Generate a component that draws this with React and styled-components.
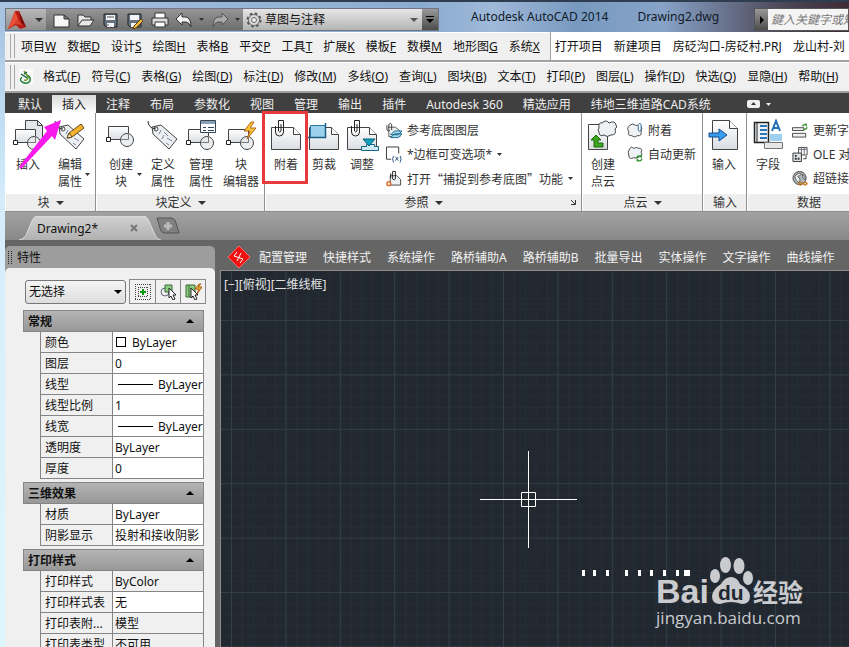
import React from 'react'
import styled, { createGlobalStyle } from 'styled-components'

const GlobalStyle = createGlobalStyle`
  * { box-sizing: border-box; }
  body {
    margin: 0;
    overflow: hidden;
    font: 12px/17px "Noto Sans", "Noto Sans CJK SC", sans-serif;
    color: #111;
  }
  button, input, select {
    font: inherit;
    color: inherit;
    margin: 0;
    padding: 0;
    border: 0;
    background: none;
  }
  button { white-space: nowrap; flex: none; }
  svg { display: block; flex: none; }
`

const Window = styled.div`
  height: 100vh;
  display: flex;
  flex-direction: column;
  padding-left: 5px;
  background: linear-gradient(to bottom, #9dbbdc, #b9d5ee 80px, #d3edfb 200px, #e0f6fd);
  overflow: hidden;
`

const TitleBar = styled.header`
  display: flex;
  align-items: flex-end;
  height: 32px;
  flex: none;
  padding-bottom: 1px;
  margin-left: -5px;
  padding-left: 5px;
  border-top: 2px solid #2f3d50;
  background: linear-gradient(to right, #a9c3e2, #8aabd0 50%, #9fb9d8 58%, #7899bf 68%, #87a3c8 78%, #4d4858 92%, #3c2b35);
`

const QuickAccess = styled.div`
  display: flex;
  align-items: center;
  width: 434px;
  height: 23px;
  flex: none;
  border: 1px solid #6d7681;
  background: linear-gradient(to bottom, #959595, #6e6e6e);
`

const AppButton = styled.button`
  display: flex;
  align-items: center;
  gap: 9px;
  width: 40px;
  height: 100%;
  padding-left: 2px;
  background: linear-gradient(to bottom, #b8b8b8, #8f8f8f);
`

const QuickTools = styled.div`
  display: flex;
  align-items: center;
  justify-content: space-between;
  flex: 1;
  padding: 0 3px 0 7px;
`

const Workspace = styled.label`
  display: flex;
  align-items: center;
  position: relative;
  width: 179px;
  height: 21px;
  padding-left: 3px;
  background: linear-gradient(to bottom, #e6e6e6, #b4b4b4);

  select {
    appearance: none;
    flex: 1;
    height: 21px;
    padding-left: 3px;
    outline: none;
  }
`

const MoreButton = styled.button`
  display: flex;
  align-items: center;
  justify-content: center;
  width: 16px;
  height: 21px;
  background: linear-gradient(to bottom, #999, #4c4c4c);
`

const Title = styled.div`
  flex: 1;
  display: flex;
  gap: 29px;
  align-self: flex-start;
  padding: 6px 0 0 32px;
  white-space: pre;
  color: #101a28;
`

const Search = styled.div`
  display: flex;
  width: 95px;
  height: 23px;
  flex: none;
  border: 1px solid #555;

  input {
    flex: 1;
    min-width: 0;
    background: #f4f4f4;
    padding-left: 3px;
    font-style: italic;
    white-space: nowrap;
  }
  input::placeholder { color: #777; }
`

const SearchArrow = styled(MoreButton)`
  width: 13px;
`

const MenuRow = styled.nav`
  display: flex;
  align-items: center;
  flex: none;
  height: ${p => p.$h || 30}px;
  padding-left: 5px;
  background: #f0f0f0;
  border-bottom: 2px solid #a0a0a0;
  box-shadow: inset 0 1px #fff;
  overflow: hidden;
`

const Grip = styled.span`
  width: 5px;
  height: 24px;
  flex: none;
  border: solid #a8a8a8;
  border-width: 0 1px;
`

const MenuItems = styled.div`
  display: flex;
  gap: 11px;
  padding-left: ${p => p.$left || 0}px;
`

const Projects = styled(MenuItems)`
  align-items: center;
  align-self: stretch;
  flex: 1;
  margin-left: 10px;
  border-left: 1px solid #a0a0a0;
  background: #fff;
`

const Tabs = styled.div`
  display: flex;
  align-items: flex-end;
  flex: none;
  height: 20px;
  padding-left: 3px;
  background: #404040;
  overflow: hidden;
`

const Tab = styled.button`
  height: 18px;
  padding: 0 10px;
  color: ${p => (p.$active ? '#222' : '#eee')};
  background: ${p => (p.$active ? 'linear-gradient(to bottom, #d8d8d8, #fff)' : 'none')};
`

const RibbonToggle = styled.button`
  display: flex;
  align-items: center;
  gap: 6px;
  height: 18px;
  margin-left: 26px;
`

const Ribbon = styled.div`
  position: relative;
  display: flex;
  flex: none;
  height: 99px;
  background: #fff;
  border-bottom: 1px solid #8c8c8c;
`

const Panel = styled.section`
  display: flex;
  flex-direction: column;
  flex: 0 0 ${p => p.$w}px;
  border-right: 1px solid #909090;
`

const PanelBody = styled.div`
  display: flex;
  height: 81px;
  padding: 6px 0 0 ${p => p.$left || 2}px;
  white-space: nowrap;
`

const PanelTitle = styled.button`
  display: flex;
  align-items: center;
  justify-content: center;
  gap: 6px;
  position: relative;
  height: 17px;
  margin-left: 1px;
  color: #333;
  background: #eee;
`

const Launcher = styled.span`
  position: absolute;
  right: 4px;
`

const BigButton = styled.button`
  display: flex;
  flex-direction: column;
  align-items: center;
  gap: 5px;
  position: relative;
  width: ${p => p.$w || 38}px;
  height: 72px;
  color: #333;
`

const ButtonCaret = styled.span`
  position: absolute;
  right: 1px;
  top: 54px;
`

const SmallList = styled.div`
  display: flex;
  flex-direction: column;
  gap: 7px;
  padding: 3px 0 0 5px;
`

const SmallButton = styled.button`
  display: flex;
  align-items: center;
  gap: 5px;
  height: 17px;
  color: #333;
`

const WideQuotes = styled.span`
  font-family: "Noto Sans CJK SC", sans-serif;
`

const Highlight = styled.div`
  position: absolute;
  left: 257px;
  top: -2px;
  width: 46px;
  height: 73px;
  border: 3px solid #e63a3c;
`

const Arrow = styled.svg`
  position: absolute;
  left: 13px;
  top: 6px;
`

const FileTabs = styled.div`
  display: flex;
  align-items: flex-end;
  flex: none;
  height: 28px;
  padding-left: 14px;
  background: linear-gradient(to bottom, #a2a2a2, #888);
`

const FileTab = styled.button`
  display: flex;
  align-items: center;
  justify-content: space-between;
  position: relative;
  width: 142px;
  height: 24px;
  padding: 0 23px 0 18px;

  > * { z-index: 1; }
  > svg:first-child {
    position: absolute;
    left: 0;
    top: 0;
    z-index: 0;
  }
`

const NewTab = styled.button`
  align-self: center;
  margin-left: -5px;
`

const Workarea = styled.main`
  display: flex;
  flex: 1;
  min-height: 0;
  background: #656565;
`

const Palette = styled.aside`
  display: flex;
  flex-direction: column;
  width: 210px;
  flex: none;
  margin-top: 6px;
  border-radius: 5px 5px 0 0;
  background: #9d9d9d;
`

const PaletteTitle = styled.h2`
  display: flex;
  align-items: center;
  gap: 5px;
  flex: none;
  height: 22px;
  margin: 0;
  padding-left: 3px;
  font: inherit;
`

const PaletteBody = styled.div`
  flex: 1;
  min-height: 0;
  overflow: hidden;
  padding: 11px 11px 0 18px;
  border-radius: 5px 5px 0 0;
  background: #f0f0f0;
`

const Picker = styled.div`
  display: flex;
  align-items: center;
  gap: 3px;
  margin: 0 -2px 6px 2px;
`

const Selection = styled.label`
  position: relative;
  flex: 1;

  select {
    appearance: none;
    display: block;
    width: 100%;
    height: 24px;
    padding-left: 3px;
    border: 1px solid #777;
    border-radius: 3px;
    background: linear-gradient(to bottom, #f4f4f4, #ddd);
  }
`

const SelectCaret = styled.span`
  position: absolute;
  right: 4px;
  top: 50%;
  margin-top: -2px;
  pointer-events: none;
`

const PickerButtons = styled.div`
  display: flex;
  border: 1px solid #8a8a8a;

  button {
    display: flex;
    align-items: center;
    justify-content: center;
    width: 25px;
    height: 23px;
  }
  button + button { border-left: 1px solid #8a8a8a; }
`

const SectionHead = styled.button`
  display: flex;
  align-items: center;
  justify-content: space-between;
  width: 100%;
  height: 22px;
  padding: 0 9px 0 4px;
  border: 1px solid #858585;
  font-weight: bold;
  background: linear-gradient(to bottom, #b4b4b4, #989898);
`

const Grid = styled.table`
  width: calc(100% - 17px);
  margin: -1px 0 3px 17px;
  border-collapse: collapse;
  table-layout: fixed;

  th, td {
    height: 21px;
    padding: 0 0 0 4px;
    border: 1px solid #858585;
    font-weight: normal;
    text-align: left;
    white-space: nowrap;
    overflow: hidden;
  }
  th { width: 72px; }
  td { padding-left: 2px; background: #fff; }
  tr[data-locked='true'] td { background: #f0f0f0; }
`

const Value = styled.span`
  display: flex;
  align-items: center;
`

const Swatch = styled.i`
  width: 10px;
  height: 10px;
  margin: 0 6px 0 1px;
  border: 1px solid #000;
`

const LineSample = styled.i`
  width: 35px;
  height: 1px;
  flex: none;
  margin: 0 5px 0 3px;
  background: #000;
`

const Drawing = styled.div`
  display: flex;
  flex-direction: column;
  flex: 1;
  min-width: 0;
  margin-left: 5px;
`

const RoadTools = styled.div`
  display: flex;
  align-items: center;
  gap: 16px;
  flex: none;
  height: 30px;
  padding: 4px 0 0 8px;
  color: #f2f2f2;
  overflow: hidden;

  svg { margin-right: -7px; }
`

const Canvas = styled.div`
  position: relative;
  flex: 1;
  min-height: 0;
  border: solid #8d8d8d;
  border-width: 1px 0 0 1px;
  background: #212830;
  overflow: hidden;
`

const Scene = styled.svg`
  position: absolute;
  width: 100%;
  height: 100%;
`

const ViewLabel = styled.div`
  position: absolute;
  left: 3px;
  top: 5px;
  color: #e4e4e4;
`

const Watermark = styled.div`
  position: absolute;
  right: 46px;
  bottom: 17px;
  color: #c9cbce;
`

const Brand = styled.div`
  display: flex;
  align-items: flex-end;
  height: 50px;
  font: bold 34px/30px "Liberation Sans", sans-serif;

  b { font: bold 25px/30px "Noto Sans CJK SC", sans-serif; }
`

const Site = styled.div`
  font: 17px/24px "Open Sans", "Noto Sans", sans-serif;
`

const Caret = ({ up, w = 8, color = '#333' }) => (
  <svg width={w} height={Math.ceil(w / 2)} viewBox="0 0 8 4" preserveAspectRatio="none" fill={color}>
    <path d={up ? 'M0 4h8L4 0z' : 'M0 0h8L4 4z'} />
  </svg>
)

const icons = {
  new: <path d="M1 4h10l5 4v8H1z M11 4v4h5" fill="#f6f6f6" stroke="#333" />,
  open: <path d="M1 15V4h5l2 2h6v3M1 15l4-6h12l-4 6z" fill="#e8e8e8" stroke="#333" />,
  save: <><path d="M2 3h13v13H4l-2-2z" fill="#65717f" stroke="#222" /><path d="M4 4h9v5H4z M5 12h7v4H5z" fill="#f4f4f4" /><path d="M5 6h7M6 13v2" stroke="#555" /></>,
  saveAs: <><path d="M2 3h13v13H4l-2-2z" fill="#65717f" stroke="#222" /><path d="M4 4h9v5H4z M5 12h7v4H5z" fill="#f4f4f4" /><path d="M8 15l7-7 2 2-7 7-3 1z" fill="#f5b83d" stroke="#5b4210" /></>,
  print: <><path d="M4 7V2h10v5" fill="#fff" stroke="#333" /><path d="M1 7h16v7H1z" fill="#dcdcdc" stroke="#333" /><path d="M4 11h10v5H4z" fill="#fff" stroke="#333" /></>,
  undo: <path d="M1 8l6-6v4h4q5 1 5 10-2-5-5-5H7v3z" fill="#f2f2f2" stroke="#333" />,
  redo: <path d="M17 8l-6-6v4H7q-5 1-5 10 2-5 5-5h4v3z" fill="#aaa" stroke="#555" />
}

const Tool = ({ name, label }) => (
  <button aria-label={label}>
    <svg width="18" height="18" viewBox="0 0 18 18">{icons[name]}</svg>
  </button>
)

const Block = () => (
  <>
    <path d="M3.500 10.500h20v13h-20z" fill="url(#sheet)" stroke="#444" />
    <circle cx="22" cy="24" r="6.500" fill="#e9ecf0" fillOpacity=".85" stroke="#444" />
    <path d="M23.500 17v6.500h-7" fill="none" stroke="#777" />
    <path d="M1.500 21.500h4v4h-4z" fill="#fff" stroke="#222" />
  </>
)

const Tag = () => (
  <>
    <path d="M5 8l9-2 16 14-8 10L6 15z" fill="#eceff3" stroke="#444" />
    <circle cx="9" cy="10" r="2" fill="#fff" stroke="#444" />
    <path d="M9 10Q1 9 1 2" fill="none" stroke="#333" />
    <path d="M12 15l2-4M17 13l4 4M15 20l2-4M20 19l5 3M19 24l3 2" stroke="#789" />
  </>
)

const Sheet = () => (
  <>
    <path d="M1.500 8.500h22l7 7v15h-29z" fill="url(#sheet)" stroke="#444" />
    <path d="M23.500 8.500v7h7" fill="#fff" stroke="#444" />
  </>
)

const Clip = () => (
  <path d="M5.500 7v6q0 4 4 4t4-4V1.500h-5V12q1 2 2.500 0V5" fill="none" stroke="#222" />
)

const Cloud = () => (
  <path d="M15 4q4-4 7 0 6-3 7 2 2 2-1 4 2 6-4 6-4 3-7 0-5 2-5-3-2-2 0-4-1-6 3-5z" fill="#eef2f4" stroke="#444" />
)

const bigIcons = {
  insert: <><path d="M13.500 18V1.500h12l5 5V22" fill="#e3e7ec" stroke="#444" /><path d="M25.500 1.500v5h5" fill="none" stroke="#444" /><Block /></>,
  editTag: <><Tag /><path d="M13 19l2-5L27 5l3 4-12 9z" fill="#f2b12f" stroke="#654812" /><path d="M13 19l2-5 3 4z" fill="#ffeec8" stroke="#654812" /></>,
  block: <g transform="translate(0 -3)"><Block /></g>,
  tag: <Tag />,
  manage: <><Block /><path d="M15.500 1.500h15v12h-15z" fill="#fff" stroke="#345" /><path d="M16 2h14v3H16z" fill="#8aa0b5" /><path d="M18 8.500h3M18 11.500h3M23 8.500h6M23 11.500h6" stroke="#345" /></>,
  editor: <><Block /><path d="M26 3l-7 9h6l-3 8 9-11h-6l4-6z" fill="#f9c33a" stroke="#b4691a" /></>,
  attach: <><Sheet /><Clip /></>,
  clip: <><Sheet /><path d="M2 7h16v11H2z" fill="#9cd0ec" /><path d="M2.500 19V6.500h15" fill="none" stroke="#2977a0" /><path d="M0 18.500h17.500V4" fill="none" stroke="#185d88" strokeWidth="1.500" /></>,
  adjust: <><Sheet /><Clip /><path d="M15.500 27.500h5v-2h8v2h4v4h-17z" fill="#cdeaf5" stroke="#156580" /><path d="M17 20h12l-6 7z" fill="#12a3c0" stroke="#0b5c70" /></>,
  cloud: <><path d="M1.500 5.500h19v25h-19z" fill="url(#sheet)" stroke="#444" /><Cloud /><path d="M4 21l5-5 5 5h-3v3h5v4H7v-7z" fill="#3ba51d" stroke="#1e6b0e" /></>,
  import: <><path d="M4.500 1.500h17l8 8v21h-25z" fill="url(#sheet)" stroke="#444" /><path d="M21.500 1.500v8h8" fill="#fff" stroke="#444" /><path d="M1 14h10v-4l8 6-8 6v-4H1z" fill="#3a9cec" stroke="#124f8f" /></>,
  field: <><path d="M2.500 3.500h14v20h-14z" fill="#eef1f3" stroke="#222" strokeWidth="1.500" /><path d="M5 4v20" stroke="#222" /><path d="M8 7h7M8 11h7M8 15h7M8 19h7" stroke="#2b77b8" strokeWidth="2" /><path d="M18 15h12v7H18z" fill="#9fd0f0" /><path d="M12.500 23.500h18v6h-18z" fill="#e7e7e7" stroke="#777" /><path d="M20 12l4-10 4 10M21 9h6" fill="none" stroke="#1f6fb5" strokeWidth="2" /></>
}

const smallIcons = {
  layers: <><path d="M3 5h7l5 4v6H3z" fill="#eef1f3" stroke="#555" /><path d="M3 6V2q2-2 3 0v6M1 3v5q2 2 3 0" fill="none" stroke="#333" /><path d="M5 13l4-4h8l-4 4z M5 16l4-4h8l-4 4z" fill="#a8dcf0" stroke="#14678e" /></>,
  frame: <><path d="M5.500 13.500h-5v-13h13v7" fill="none" stroke="#333" /><path d="M8 10q-2 3 0 7M15 10q2 3 0 7M10 11l3 4M13 11l-3 4" fill="none" stroke="#27527c" /></>,
  snap: <><path d="M4.500 5.500h7l4 4v6h-11z" fill="#eef1f3" stroke="#444" /><path d="M7 9V1h3v8q-1 2-3 0M5 3v5" fill="none" stroke="#222" /><circle cx="3" cy="14" r="2" fill="#fff" stroke="#dd6a28" strokeWidth="1.500" /></>,
  cloudAttach: <><path d="M3 3q3-3 6 0h5q3 3 1 6 1 6-4 5-3 3-6 0-5 0-3-4-3-4 1-7z" fill="#eef2f4" stroke="#444" /><path d="M12 3v5q1 3 3 0V2q-1-2-3 0" fill="#fff" stroke="#24659a" /></>,
  cloudUpdate: <><path d="M3 2q2-3 4 0 3-2 6 0 4 0 2 4 2 4-2 5-3 2-6 1-5 2-5-2-2-4 1-8z" fill="#eef2f4" stroke="#444" /><path d="M10 12q2-3 5-1V9M16 13q-2 4-5 1v2" fill="none" stroke="#27922a" strokeWidth="1.500" /></>,
  fieldUpdate: <><path d="M.5 5.500h12v3H.5z M.5 11.500h14v4H.5z" fill="#eee" stroke="#444" /><path d="M11 4q2-3 4-1V1M16 5q-1 3-4 2" fill="none" stroke="#3a9330" strokeWidth="1.500" /></>,
  ole: <><path d="M7 1h9v8H7z" fill="#fff" stroke="#444" /><path d="M7 3h9M10 1v8M13 1v8" stroke="#667" /><path d="M1 7h9v9H1z" fill="#dfe3e8" stroke="#333" /><path d="M3 9h2v2H3zM6 12h2v2H6zM3 12h2v2H3z" fill="#333" /><path d="M12 13h3v-3" stroke="#333" fill="none" /></>,
  link: <><circle cx="8" cy="8" r="7" fill="#aeb6bd" stroke="#444" /><path d="M3 6q5-5 7-2-2 2-4 2 4 3 2 7-4-1-5-7M11 4q4 2 3 6-3-1-3-6" fill="#eef2f4" stroke="#555" /><path d="M7 14q2-3 4 0-2 3-4 0M12 14q2-3 4 0-2 3-4 0" fill="none" stroke="#c07820" strokeWidth="1.500" /></>
}

const RibbonButton = ({ icon, lines, w, caret }) => (
  <BigButton $w={w}>
    <svg width="32" height="32" viewBox="0 0 32 32" overflow="visible">{bigIcons[icon]}</svg>
    <span>{lines.map((line, i) => <div key={i}>{line}</div>)}</span>
    {caret && <ButtonCaret><Caret w={5} /></ButtonCaret>}
  </BigButton>
)

const ListButton = ({ icon, children, caret }) => (
  <SmallButton>
    <svg width="16" height="17" viewBox="0 0 17 17">{smallIcons[icon]}</svg>
    {children}
    {caret && <Caret w={5} />}
  </SmallButton>
)

const menus = [['项目', 'W'], ['数据', 'D'], ['设计', 'S'], ['绘图', 'H'], ['表格', 'B'], ['平交', 'P'], ['工具', 'T'], ['扩展', 'K'], ['模板', 'F'], ['数模', 'M'], ['地形图', 'G'], ['系统', 'X']]
const projects = ['打开项目', '新建项目', '房砭沟口-房砭村.PRJ', '龙山村-刘']
const commands = [['格式', 'F'], ['符号', 'C'], ['表格', 'G'], ['绘图', 'D'], ['标注', 'D'], ['修改', 'M'], ['多线', 'O'], ['查询', 'L'], ['图块', 'B'], ['文本', 'T'], ['打印', 'P'], ['图层', 'L'], ['操作', 'D'], ['快选', 'Q'], ['显隐', 'H'], ['帮助', 'H']]
const tabs = ['默认', '插入', '注释', '布局', '参数化', '视图', '管理', '输出', '插件', 'Autodesk 360', '精选应用', '纬地三维道路CAD系统']
const roadTools = ['配置管理', '快捷样式', '系统操作', '路桥辅助A', '路桥辅助B', '批量导出', '实体操作', '文字操作', '曲线操作']

const sections = [
  {
    name: '常规',
    rows: [
      ['颜色', <Value><Swatch />ByLayer</Value>],
      ['图层', '0'],
      ['线型', <Value><LineSample />ByLayer</Value>],
      ['线型比例', '1'],
      ['线宽', <Value><LineSample />ByLayer</Value>],
      ['透明度', 'ByLayer'],
      ['厚度', '0']
    ]
  },
  { name: '三维效果', rows: [['材质', 'ByLayer'], ['阴影显示', '投射和接收阴影']] },
  {
    name: '打印样式',
    rows: [['打印样式', 'ByColor', true], ['打印样式表', '无'], ['打印表附...', '模型', true], ['打印表类型', '不可用', true]]
  }
]

const Header = () => (
  <TitleBar>
    <QuickAccess>
      <AppButton aria-label="应用程序菜单">
        <svg width="18" height="20" viewBox="0 0 18 20">
          <path d="M7 1h4l7 16-6 2-4-4-8 4z" fill="#b81c14" />
          <path d="M7 1l3 8-3 5-7 5z" fill="#e9503a" />
          <path d="M11 1l7 16-5-4z" fill="#7e0f0b" />
          <path d="M10 9l4 6-7-1z" fill="#d9402e" />
        </svg>
        <Caret />
      </AppButton>
      <QuickTools>
        <Tool name="new" label="新建" />
        <Tool name="open" label="打开" />
        <Tool name="save" label="保存" />
        <Tool name="saveAs" label="另存为" />
        <Tool name="print" label="打印" />
        <Tool name="undo" label="放弃" />
        <Caret w={5} />
        <Tool name="redo" label="重做" />
        <Caret w={5} />
      </QuickTools>
      <Workspace>
        <svg width="16" height="16" viewBox="0 0 16 16">
          <circle cx="8" cy="8" r="6.500" fill="none" stroke="#555" strokeWidth="2" strokeDasharray="2.600 2.500" />
          <circle cx="8" cy="8" r="5.500" fill="#ddd" stroke="#666" />
          <circle cx="8" cy="8" r="2.500" fill="#eee" stroke="#666" />
        </svg>
        <select aria-label="工作空间"><option>草图与注释</option></select>
        <SelectCaret><Caret color="#555" /></SelectCaret>
      </Workspace>
      <MoreButton aria-label="自定义">
        <svg width="8" height="7" viewBox="0 0 8 7"><path d="M0 0h8v1H0zM0 3h8L4 7z" /></svg>
      </MoreButton>
    </QuickAccess>
    <Title><span>Autodesk AutoCAD 2014</span><span>Drawing2.dwg</span></Title>
    <Search>
      <SearchArrow aria-label="展开"><svg width="4" height="8" viewBox="0 0 4 8"><path d="M0 0l4 4-4 4z" /></svg></SearchArrow>
      <input aria-label="搜索" placeholder="鍵入关鍵字或短语" />
    </Search>
  </TitleBar>
)

const RibbonPanels = () => (
  <Ribbon>
    <svg width="0" height="0" style={{ position: 'absolute' }}>
      <linearGradient id="sheet" x1="0" y1="0" x2="0" y2="1">
        <stop offset="0" stopColor="#fff" />
        <stop offset="1" stopColor="#d9dde2" />
      </linearGradient>
    </svg>
    <Panel $w={91}>
      <PanelBody>
        <RibbonButton icon="insert" lines={['插入']} w={42} />
        <RibbonButton icon="editTag" lines={['编辑', '属性']} w={42} caret />
      </PanelBody>
      <PanelTitle>块 <Caret /></PanelTitle>
    </Panel>
    <Panel $w={169}>
      <PanelBody $left={3}>
        <RibbonButton icon="block" lines={['创建', '块']} w={44} caret />
        <RibbonButton icon="tag" lines={['定义', '属性']} w={40} />
        <RibbonButton icon="manage" lines={['管理', '属性']} w={36} />
        <RibbonButton icon="editor" lines={['块', '编辑器']} w={44} />
      </PanelBody>
      <PanelTitle>块定义 <Caret /></PanelTitle>
    </Panel>
    <Panel $w={317}>
      <PanelBody>
        <RibbonButton icon="attach" lines={['附着']} />
        <RibbonButton icon="clip" lines={['剪裁']} />
        <RibbonButton icon="adjust" lines={['调整']} />
        <SmallList>
          <ListButton icon="layers">参考底图图层</ListButton>
          <ListButton icon="frame" caret>*边框可变选项*</ListButton>
          <ListButton icon="snap" caret><WideQuotes>打开“捕捉到参考底图”功能</WideQuotes></ListButton>
        </SmallList>
      </PanelBody>
      <PanelTitle>
        参照 <Caret />
        <Launcher><svg width="7" height="7" viewBox="0 0 7 7"><path d="M1 1l4 4M5.500 1v4.500H1" fill="none" stroke="#333" /></svg></Launcher>
      </PanelTitle>
    </Panel>
    <Panel $w={121}>
      <PanelBody>
        <RibbonButton icon="cloud" lines={['创建', '点云']} />
        <SmallList>
          <ListButton icon="cloudAttach">附着</ListButton>
          <ListButton icon="cloudUpdate">自动更新</ListButton>
        </SmallList>
      </PanelBody>
      <PanelTitle>点云 <Caret /></PanelTitle>
    </Panel>
    <Panel $w={44}>
      <PanelBody>
        <RibbonButton icon="import" lines={['输入']} />
      </PanelBody>
      <PanelTitle>输入</PanelTitle>
    </Panel>
    <Panel $w={124}>
      <PanelBody>
        <RibbonButton icon="field" lines={['字段']} />
        <SmallList>
          <ListButton icon="fieldUpdate">更新字</ListButton>
          <ListButton icon="ole">OLE 对</ListButton>
          <ListButton icon="link">超链接</ListButton>
        </SmallList>
      </PanelBody>
      <PanelTitle>数据</PanelTitle>
    </Panel>
    <Highlight />
    <Arrow width="44" height="52" viewBox="0 0 44 52">
      <path d="M43 1L26 8l3 4L1 48l2 2 31-33 3 4z" fill="#f719ee" />
    </Arrow>
  </Ribbon>
)

const Properties = () => (
  <Palette>
    <PaletteTitle>
      <svg width="4" height="13" viewBox="0 0 4 13">
        <path d="M.5 0v13M3.500 0v13" stroke="#222" strokeDasharray="1 1" />
      </svg>
      特性
    </PaletteTitle>
    <PaletteBody>
      <Picker>
        <Selection>
          <select aria-label="选择对象"><option>无选择</option></select>
          <SelectCaret><Caret color="#000" /></SelectCaret>
        </Selection>
        <PickerButtons>
          <button aria-label="添加选择">
            <svg width="16" height="16" viewBox="0 0 16 16">
              <path d="M0 .5h16M3 3.500h10M3 12.500h10M0 15.500h16M.5 0v16M15.500 0v16M3.500 3v10M12.500 3v10" stroke="#444" strokeDasharray="1 1" />
              <path d="M8 5v6M5 8h6" stroke="#0a9a10" strokeWidth="2" />
            </svg>
          </button>
          <button aria-label="选择对象">
            <svg width="17" height="17" viewBox="0 0 17 17">
              <circle cx="5" cy="9" r="4" fill="#eee" stroke="#667" />
              <path d="M5 2h7v7H5z" fill="#8ccc84" stroke="#3b6b37" />
              <path d="M9 5v10l2-2 2 4 2-1-2-4h3z" fill="#fff" stroke="#222" />
            </svg>
          </button>
          <button aria-label="快速选择">
            <svg width="17" height="17" viewBox="0 0 17 17">
              <path d="M1 2h9v12H1z" fill="#8ccc84" stroke="#3b6b37" />
              <path d="M4 2v12" stroke="#3b6b37" />
              <path d="M14 1l-4 5h4l-2 5 5-7h-4l3-3z" fill="#f6b52c" stroke="#a85f12" />
              <path d="M6 5v10l2-2 2 4 2-1-2-4h3z" fill="#fff" stroke="#222" />
            </svg>
          </button>
        </PickerButtons>
      </Picker>
      {sections.map(({ name, rows }) => (
        <React.Fragment key={name}>
          <SectionHead>{name}<Caret up color="#000" /></SectionHead>
          <Grid>
            <tbody>
              {rows.map(([label, value, locked]) => (
                <tr key={label} data-locked={!!locked}>
                  <th scope="row">{label}</th>
                  <td>{value}</td>
                </tr>
              ))}
            </tbody>
          </Grid>
        </React.Fragment>
      ))}
    </PaletteBody>
  </Palette>
)

const Model = () => (
  <Canvas>
    <Scene>
      <defs>
        <pattern id="grid" x="10" y="49" width="54.4" height="54.4" patternUnits="userSpaceOnUse">
          <path d="M11.4 0v54.4M22.3 0v54.4M33.1 0v54.4M44 0v54.4M0 11.4h54.4M0 22.3h54.4M0 33.1h54.4M0 44h54.4" stroke="#262d37" />
          <path d="M.5 0v54.4M0 .5h54.4" stroke="#353d49" />
        </pattern>
      </defs>
      <rect width="100%" height="100%" fill="url(#grid)" />
      <path d="M259 228.500h97M307.500 180v97M300.500 221.500h14v14h-14z" fill="none" stroke="#fff" />
      <path d="M361 299h3v6h-3zM372 299h3v6h-3zM385 299h3v6h-3zM404 299h3v6h-3zM417 299h3v6h-3zM429 299h3v6h-3zM442 299h3v6h-3zM455 299h3v6h-3zM463 299h6v6h-6z" fill="#fff" />
    </Scene>
    <ViewLabel>[−][俯视][二维线框]</ViewLabel>
    <Watermark>
      <Brand>
        Bai
        <svg width="44" height="50" viewBox="0 0 44 50" fill="#c9cbce">
          <ellipse cx="6" cy="20" rx="5" ry="7" />
          <ellipse cx="16.500" cy="9" rx="5.500" ry="8" />
          <ellipse cx="30" cy="10" rx="5.500" ry="8" />
          <ellipse cx="39" cy="22" rx="5" ry="7" />
          <path d="M22 21q6 0 9 7 10 6 10 12 0 8-8 8-6-2-11-2t-11 2q-8 0-8-8 1-7 9-12 4-7 10-7z" />
          <text x="9" y="44" fill="#212830" fontSize="21">du</text>
        </svg>
        <b>经验</b>
      </Brand>
      <Site>jingyan.baidu.com</Site>
    </Watermark>
  </Canvas>
)

const App = () => (
  <Window>
    <GlobalStyle />
    <Header />
    <MenuRow>
      <Grip />
      <MenuItems $left={6}>
        {menus.map(([text, key]) => <button key={text}>{text}<u>{key}</u></button>)}
      </MenuItems>
      <Projects $left={4}>
        {projects.map(name => <button key={name}>{name}</button>)}
      </Projects>
    </MenuRow>
    <MenuRow $h={31}>
      <Grip />
      <svg width="18" height="18" viewBox="0 0 18 18" style={{ marginLeft: 2 }}>
        <path d="M2 1h14v15H2z" fill="#fafafa" />
        <path d="M5 9q-3 3 0 5 5 3 8-1 1-4-3-6" fill="none" stroke="#24823a" strokeWidth="1.500" />
        <path d="M7 12q4 1 4-3L7 3" fill="none" stroke="#6c9a28" strokeWidth="1.500" />
        <path d="M4 6l6 4M7 6l3-2" stroke="#195c46" strokeWidth="1.500" />
      </svg>
      <MenuItems $left={8}>
        {commands.map(([text, key]) => <button key={text}>{text}(<u>{key}</u>)</button>)}
      </MenuItems>
    </MenuRow>
    <Tabs>
      {tabs.map(name => <Tab key={name} $active={name === '插入'}>{name}</Tab>)}
      <RibbonToggle aria-label="最小化功能区">
        <svg width="13" height="8" viewBox="0 0 13 8"><rect width="13" height="8" rx="2" fill="#eee" /><path d="M4 5h5L6.500 2z" fill="#333" /></svg>
        <Caret w={5} color="#eee" />
      </RibbonToggle>
    </Tabs>
    <RibbonPanels />
    <FileTabs>
      <FileTab>
        <svg width="142" height="24" viewBox="0 0 142 24">
          <defs>
            <linearGradient id="tab" x1="0" y1="0" x2="0" y2="1">
              <stop offset="0" stopColor="#d2d2d2" />
              <stop offset="1" stopColor="#b0b0b0" />
            </linearGradient>
          </defs>
          <path d="M0 24q6-1 8-7l5-12q2-5 6-5h105q4 0 6 5l5 12q3 7 7 7z" fill="url(#tab)" />
          <path d="M0 24q6-1 8-7l5-12q2-5 6-5h105q4 0 6 5l5 12q3 7 7 7" fill="none" stroke="#ddd" />
        </svg>
        <span>Drawing2*</span>
        <svg width="8" height="8" viewBox="0 0 8 8"><path d="M1 1l6 6M7 1L1 7" stroke="#777" strokeWidth="2" /></svg>
      </FileTab>
      <NewTab aria-label="新图形">
        <svg width="24" height="18" viewBox="0 0 24 18">
          <path d="M1 1h13q5 0 6 5l3 10H9q-4 0-5-5z" fill="#808080" stroke="#555" />
          <path d="M12 5v8M8 9h8" stroke="#bbb" strokeWidth="3" />
        </svg>
      </NewTab>
    </FileTabs>
    <Workarea>
      <Properties />
      <Drawing>
        <RoadTools>
          <svg width="22" height="22" viewBox="0 0 22 22">
            <path d="M11 0l11 11-11 11L0 11z" fill="#f01010" stroke="#f66" />
            <path d="M9 6l-3 4 9 3-3 4M13 7l-2 4M11 11l-2 4" fill="none" stroke="#fff" />
          </svg>
          {roadTools.map(name => <button key={name}>{name}</button>)}
        </RoadTools>
        <Model />
      </Drawing>
    </Workarea>
  </Window>
)

export default App
